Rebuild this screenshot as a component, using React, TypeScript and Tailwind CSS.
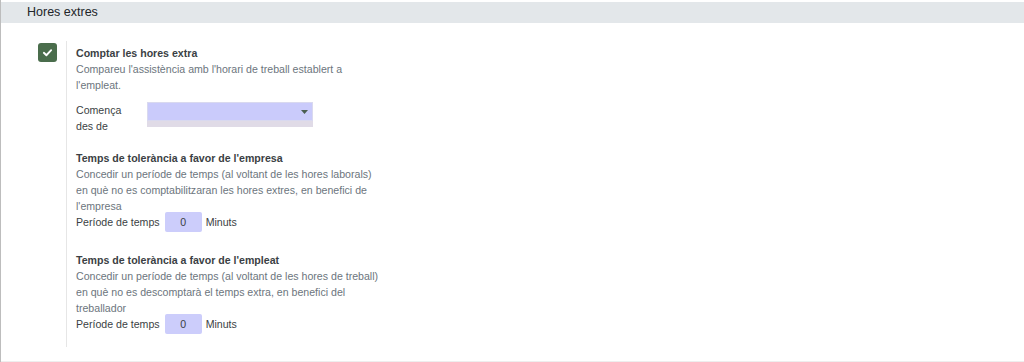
import React from "react";

const font = { fontFamily: '"Liberation Sans", Arial, sans-serif' };

function Tolerance({ title, lines }: { title: string; lines: string[] }) {
  return (
    <div className="flex flex-col text-[10.6px] leading-[16px]">
      <div className="font-bold text-[#3b3f44]">{title}</div>
      {lines.map((l) => (
        <div key={l} className="text-[#6c757d]">
          {l}
        </div>
      ))}
      <div className="-mt-[2px] flex items-center h-[20px] text-[#3b3f44]">
        <span>Període de temps</span>
        <span className="ml-[5px] w-[37px] h-[20px] rounded-[2px] bg-[#cccdfb] flex items-center justify-center">
          0
        </span>
        <span className="ml-[4px]">Minuts</span>
      </div>
    </div>
  );
}

export default function App() {
  return (
    <div className="w-[1024px] h-[362px] bg-white border-l border-[#bdbdbd] flex flex-col" style={font}>
      {/* Header */}
      <div className="mt-[2px] h-[21px] bg-[#e3e7ea] flex items-center pl-[26px] text-[12.5px] text-[#212529]">
        Hores extres
      </div>
      <div className="flex-1 border-b border-[#eeeeee] flex">
        <div className="pl-[37px] pt-[20px] w-[65px]">
          <div className="w-[19px] h-[19px] rounded-[3px] bg-[#4a6d4c] flex items-center justify-center">
            <svg width="11" height="11" viewBox="0 0 12 12">
              <path d="M2 6.3 L4.8 9 L10 3.5" fill="none" stroke="white" strokeWidth="2" strokeLinecap="round" strokeLinejoin="round" />
            </svg>
          </div>
        </div>
        <div className="mt-[18px] mb-[14px] border-l border-[#e6e6e6] pl-[9px] flex flex-col text-[10.6px] leading-[16px]">
          <div className="pt-[4px] font-bold text-[#3b3f44]">Comptar les hores extra</div>
          <div className="text-[#6c757d] w-[276px]">
            Compareu l'assistència amb l'horari de treball establert a l'empleat.
          </div>
          <div className="flex mt-[9px] text-[#3b3f44]">
            <div className="w-[71px]">
              Comença
              <br />
              des de
            </div>
            <div className="flex flex-col">
              <div className="w-[166px] h-[19px] bg-[#cacbfb] border border-[#d9d9ef] flex items-center justify-end pr-[4px]">
                <svg width="7" height="4" viewBox="0 0 7 4">
                  <path d="M0 0 L7 0 L3.5 4 Z" fill="#4b5e52" />
                </svg>
              </div>
              <div className="w-[166px] h-[6px] bg-[#e0dbe7]" />
            </div>
          </div>
          <div className="mt-[16px]">
            <Tolerance
              title="Temps de tolerància a favor de l'empresa"
              lines={[
                "Concedir un període de temps (al voltant de les hores laborals)",
                "en què no es comptabilitzaran les hores extres, en benefici de",
                "l'empresa",
              ]}
            />
          </div>
          <div className="mt-[20px]">
            <Tolerance
              title="Temps de tolerància a favor de l'empleat"
              lines={[
                "Concedir un període de temps (al voltant de les hores de treball)",
                "en què no es descomptarà el temps extra, en benefici del",
                "treballador",
              ]}
            />
          </div>
        </div>
      </div>
    </div>
  );
}
